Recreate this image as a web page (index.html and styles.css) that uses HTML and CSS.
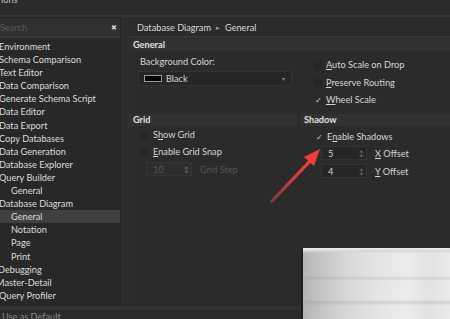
FILE: index.html
```html
<!DOCTYPE html>
<html>
<head>
	<meta charset="UTF-8">
	<title>Options</title>
	<link rel="stylesheet" href="styles.css">
</head>
<body>

	<div class="window">

		<div class="titlebar"><span class="title">ions</span></div>

		<div class="main">

			<div class="left">
				<div class="search">
					<span class="placeholder">Search</span>
					<span class="clear">&#10006;</span>
				</div>
				<ul class="tree">
					<li>Environment</li>
					<li>Schema Comparison</li>
					<li>Text Editor</li>
					<li>Data Comparison</li>
					<li>Generate Schema Script</li>
					<li>Data Editor</li>
					<li>Data Export</li>
					<li>Copy Databases</li>
					<li>Data Generation</li>
					<li>Database Explorer</li>
					<li>Query Builder</li>
					<li class="child">General</li>
					<li>Database Diagram</li>
					<li class="child selected">General</li>
					<li class="child">Notation</li>
					<li class="child">Page</li>
					<li class="child">Print</li>
					<li class="cut">Debugging</li>
					<li class="cut2">Master-Detail</li>
					<li>Query Profiler</li>
				</ul>
			</div>

			<div class="vscroll"></div>

			<div class="right">
				<div class="crumb">
					<span>Database Diagram</span>
					<span class="sep">&#9656;</span>
					<span>General</span>
				</div>

				<div class="group_head">General</div>
				<div class="group_row">
					<div class="col_left">
						<div class="label">Background Color:</div>
						<div class="combo">
							<span class="swatch"></span>
							<span class="combo_text">Black</span>
							<span class="combo_arrow">&#9662;</span>
						</div>
					</div>
					<div class="col_right">
						<div class="check"><span class="box"></span><span><u>A</u>uto Scale on Drop</span></div>
						<div class="check"><span class="box"></span><span><u>P</u>reserve Routing</span></div>
						<div class="check"><span class="box on">&#10003;</span><span><u>W</u>heel Scale</span></div>
					</div>
				</div>

				<div class="split">
					<div class="grid_col">
						<div class="group_head">Grid</div>
						<div class="check indent"><span class="box"></span><span>S<u>h</u>ow Grid</span></div>
						<div class="check indent"><span class="box"></span><span><u>E</u>nable Grid Snap</span></div>
						<div class="spin_row disabled">
							<div class="spin"><span class="spin_val">10</span><span class="spin_btn">&#8597;</span></div>
							<span class="spin_label">Grid Step</span>
						</div>
					</div>
					<div class="shadow_col">
						<div class="group_head">Shadow</div>
						<div class="check"><span class="box on">&#10003;</span><span>E<u>n</u>able Shadows</span></div>
						<div class="spin_row">
							<div class="spin"><span class="spin_val">5</span><span class="spin_btn">&#8597;</span></div>
							<span class="spin_label"><u>X</u> Offset</span>
						</div>
						<div class="spin_row">
							<div class="spin"><span class="spin_val">4</span><span class="spin_btn">&#8597;</span></div>
							<span class="spin_label"><u>Y</u> Offset</span>
						</div>
					</div>
				</div>
			</div>

		</div>

		<div class="hscroll"></div>
		<div class="footer"><span>Use as Default</span></div>

		<svg class="arrow" width="70" height="70" viewBox="0 0 70 70">
			<defs>
				<linearGradient id="ar" x1="0" y1="1" x2="1" y2="0">
					<stop offset="0" stop-color="#7a3a4a"/>
					<stop offset="0.5" stop-color="#d83838"/>
					<stop offset="1" stop-color="#ff4040"/>
				</linearGradient>
			</defs>
			<line x1="4" y1="66" x2="44" y2="24" stroke="url(#ar)" stroke-width="3.2" stroke-linecap="round"/>
			<polygon points="52,14 36,22 46,31" fill="#f23c3c"/>
		</svg>

		<div class="blur"></div>

	</div>

</body>
</html>
```

FILE: styles.css
```css
html, body{
	margin: 0;
	padding: 0;
	background: #2b2b2b;
}

.window{
	position: relative;
	width: 450px;
	height: 319px;
	overflow: hidden;
	background: #2b2b2b;
	color: #d6d6d6;
	font-family: Lato, "Liberation Sans", sans-serif;
	font-size: 9.2px;
}

.titlebar{
	height: 17px;
	overflow: hidden;
	border-bottom: 2px solid #353535;
	box-sizing: border-box;
}

.title{
	display: block;
	margin-top: -5px;
	padding-left: 1px;
	line-height: 10px;
	color: #bdbdbd;
}

.main{
	display: flex;
	height: 288px;
}

/* left tree */

.left{
	width: 120px;
	background: #282828;
}

.search{
	display: flex;
	align-items: center;
	height: 17px;
	margin-top: 2px;
	background: #303030;
	border-bottom: 2px solid #383838;
	padding: 0 3px 0 0;
}

.placeholder{
	flex: 1;
	color: #5a5a5a;
}

.clear{
	font-size: 7px;
	color: #d0d0d0;
}

.tree{
	list-style: none;
	margin: 2px 0 0 0;
	padding: 0;
}

.tree li{
	height: 13.1px;
	line-height: 13.1px;
	white-space: nowrap;
	margin-left: -1px;
	color: #dcdcdc;
}

.tree li.child{
	padding-left: 12px;
}

.tree li.selected{
	background: #404040;
}

.tree li.cut{
	margin-left: -2px;
}

.tree li.cut2{
	margin-left: -4px;
}

.vscroll{
	width: 8px;
	background: #2e2e2e;
	border-left: 1px solid #262626;
}

/* right page */

.right{
	flex: 1;
	background: #2b2b2b;
}

.crumb{
	height: 17px;
	margin-top: 2px;
	padding-left: 8px;
	display: flex;
	align-items: center;
	gap: 5px;
	border-bottom: 2px solid #363636;
	color: #d8d8d8;
}

.crumb .sep{
	font-size: 7px;
	color: #9a9a9a;
}

.group_head{
	height: 12px;
	line-height: 12px;
	padding-left: 4px;
	margin-top: 1px;
	background: #313131;
	font-weight: bold;
	color: #e0e0e0;
}

.group_row{
	display: flex;
	height: 61px;
}

.col_left{
	width: 170px;
	padding: 5px 0 0 11px;
	box-sizing: border-box;
}

.label{
	height: 12px;
	line-height: 12px;
}

.combo{
	display: flex;
	align-items: center;
	width: 152px;
	height: 13px;
	margin-top: 3px;
	margin-left: -2px;
	background: #262626;
	border: 1px solid #333333;
}

.swatch{
	width: 16px;
	height: 5px;
	margin: 0 4px 0 5px;
	background: #000000;
	border: 1px solid #9a9a9a;
}

.combo_text{
	flex: 1;
}

.combo_arrow{
	font-size: 6px;
	color: #8a8a8a;
	padding-right: 6px;
}

.col_right{
	padding: 5px 0 0 15px;
}

.check{
	display: flex;
	align-items: center;
	gap: 4px;
	height: 17.5px;
}

.box{
	width: 8px;
	height: 8px;
	background: #262626;
	font-size: 8px;
	line-height: 8px;
	color: #cfcfcf;
	text-align: center;
}

.box.on{
	background: transparent;
}

.split{
	display: flex;
	margin-top: 1px;
}

.grid_col{
	width: 170px;
}

.shadow_col{
	flex: 1;
	border-left: 1px solid #2b2b2b;
}

.grid_col .group_head{
	margin-right: 2px;
}

.grid_col .check{
	padding-left: 12px;
	height: 17px;
}

.grid_col .check:first-of-type{
	margin-top: 3px;
}

.shadow_col .check{
	padding-left: 15px;
	margin-top: 3px;
	height: 15px;
}

.spin_row{
	display: flex;
	align-items: center;
	gap: 8px;
	height: 18px;
	padding-left: 21px;
}

.grid_col .spin_row{
	padding-left: 17px;
}

.spin{
	display: flex;
	align-items: center;
	width: 44px;
	height: 12px;
	background: #262626;
	border: 1px solid #343434;
}

.spin_val{
	flex: 1;
	padding-left: 6px;
}

.spin_btn{
	font-size: 7px;
	color: #777777;
	padding-right: 2px;
}

.disabled{
	color: #555555;
}

.disabled .spin{
	background: #2d2d2d;
}

.hscroll{
	height: 5px;
	background: #333333;
	border-top: 1px solid #262626;
	box-sizing: border-box;
}

.footer{
	height: 9px;
	overflow: hidden;
	padding-left: 2px;
	color: #8a8a8a;
	line-height: 14px;
}

/* overlays from the screenshot annotation */

.arrow{
	position: absolute;
	left: 268px;
	top: 135px;
}

.blur{
	position: absolute;
	left: 301px;
	top: 248px;
	width: 149px;
	height: 71px;
	border-left: 2px solid #1e1e1e;
	background:
		linear-gradient(180deg, #eeeeee 0px, #d6d6d6 3px, transparent 5px),
		linear-gradient(180deg, transparent 28px, rgba(150,150,150,0.25) 30px, transparent 33px, transparent 52px, rgba(140,140,140,0.25) 54px, transparent 58px),
		linear-gradient(90deg, #b4b4b4 0%, #c4c4c4 12%, #d8d8d8 30%, #e4e4e4 50%, #ececec 70%, #e2e2e2 85%, #ebebeb 100%);
}
```
